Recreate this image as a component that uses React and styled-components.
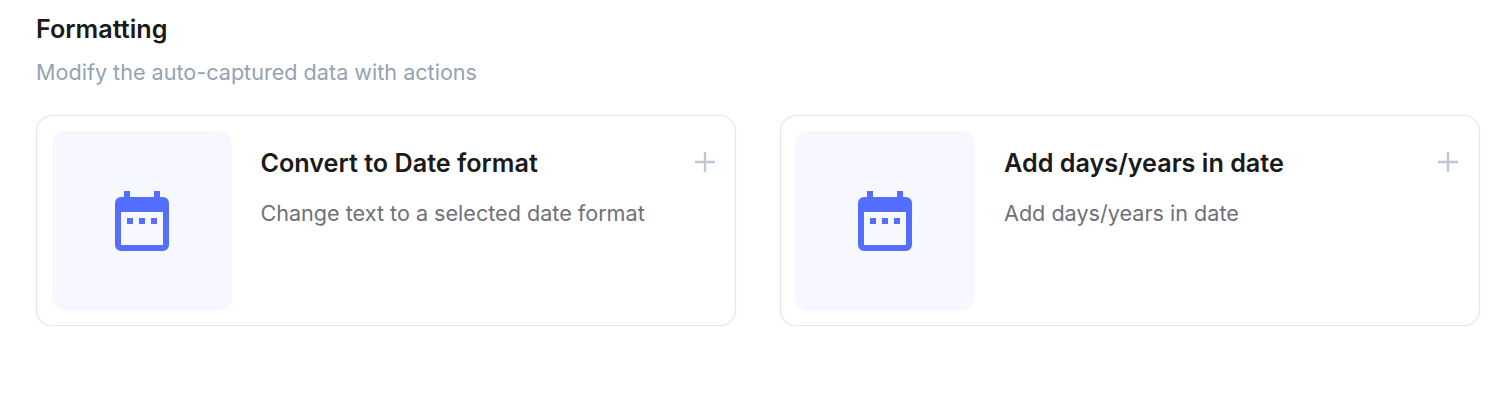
import React from 'react'
import styled, { createGlobalStyle } from 'styled-components'

const GlobalStyle = createGlobalStyle`
  html, body {
    margin: 0;
    padding: 0;
    background: #fff;
    font-family: Inter, "Liberation Sans", sans-serif;
  }
`

const Page = styled.div`
  padding: 15px 18px 0 36px;
`

const Heading = styled.h2`
  margin: 0;
  font-size: 25.2px;
  line-height: 29px;
  font-weight: 600;
  color: #1a1a1a;
`

const Subheading = styled.p`
  margin: 14px 0 0;
  font-size: 21.6px;
  line-height: 28px;
  font-weight: 400;
  color: #94a3b3;
`

const CardRow = styled.div`
  display: grid;
  grid-template-columns: 699.8px 700px;
  gap: 43.8px;
  margin-top: 29px;
`

const Card = styled.div`
  display: flex;
  height: 211px;
  box-sizing: border-box;
  padding: 15px 14.8px;
  border: 1px solid #e4e4e9;
  border-radius: 16px;
  background: #fff;
  box-shadow: 0 1px 3px rgba(20, 20, 40, 0.04);
`

const IconTile = styled.div`
  display: flex;
  flex: none;
  align-items: center;
  justify-content: center;
  width: 180px;
  height: 180px;
  border-radius: 14px;
  background: #f6f7ff;
`

const CardBody = styled.div`
  flex: 1;
  padding: 16px 0 0 28.6px;
`

const TitleRow = styled.div`
  display: flex;
  align-items: flex-start;
  justify-content: space-between;
  padding-right: 5.4px;
`

const CardTitle = styled.h3`
  margin: 0;
  font-size: 25.2px;
  line-height: 32px;
  font-weight: 600;
  color: #1a1a1a;
`

const CardText = styled.p`
  margin: 20px 0 0;
  font-size: 21.6px;
  line-height: 28px;
  color: #6f7177;
`

const PlusButton = styled.span`
  display: flex;
  flex: none;
  margin-top: 5px;
`

const CalendarIcon = () => (
  <svg width="54" height="60" viewBox="0 0 54 60" aria-hidden="true">
    <path
      fill="#546fff"
      fillRule="evenodd"
      d="M9 0h6v6h24V0h6v6h3a6 6 0 0 1 6 6v42a6 6 0 0 1-6 6H6a6 6 0 0 1-6-6V12a6 6 0 0 1 6-6h3V0ZM6 21v33h42V21H6Zm6 6h6v6h-6v-6Zm12 0h6v6h-6v-6Zm12 0h6v6h-6v-6Z"
    />
  </svg>
)

const PlusIcon = () => (
  <svg width="20" height="20" viewBox="0 0 20 20" aria-hidden="true">
    <path fill="none" stroke="#bdc8d3" strokeWidth="2.4" d="M10 0v20M0 10h20" />
  </svg>
)

const actions = [
  { title: 'Convert to Date format', text: 'Change text to a selected date format' },
  { title: 'Add days/years in date', text: 'Add days/years in date' },
]

export default function App() {
  return (
    <>
      <GlobalStyle />
      <Page>
        <Heading>Formatting</Heading>
        <Subheading>Modify the auto-captured data with actions</Subheading>
        <CardRow>
          {actions.map((action) => (
            <Card key={action.title}>
              <IconTile>
                <CalendarIcon />
              </IconTile>
              <CardBody>
                <TitleRow>
                  <CardTitle>{action.title}</CardTitle>
                  <PlusButton>
                    <PlusIcon />
                  </PlusButton>
                </TitleRow>
                <CardText>{action.text}</CardText>
              </CardBody>
            </Card>
          ))}
        </CardRow>
      </Page>
    </>
  )
}
